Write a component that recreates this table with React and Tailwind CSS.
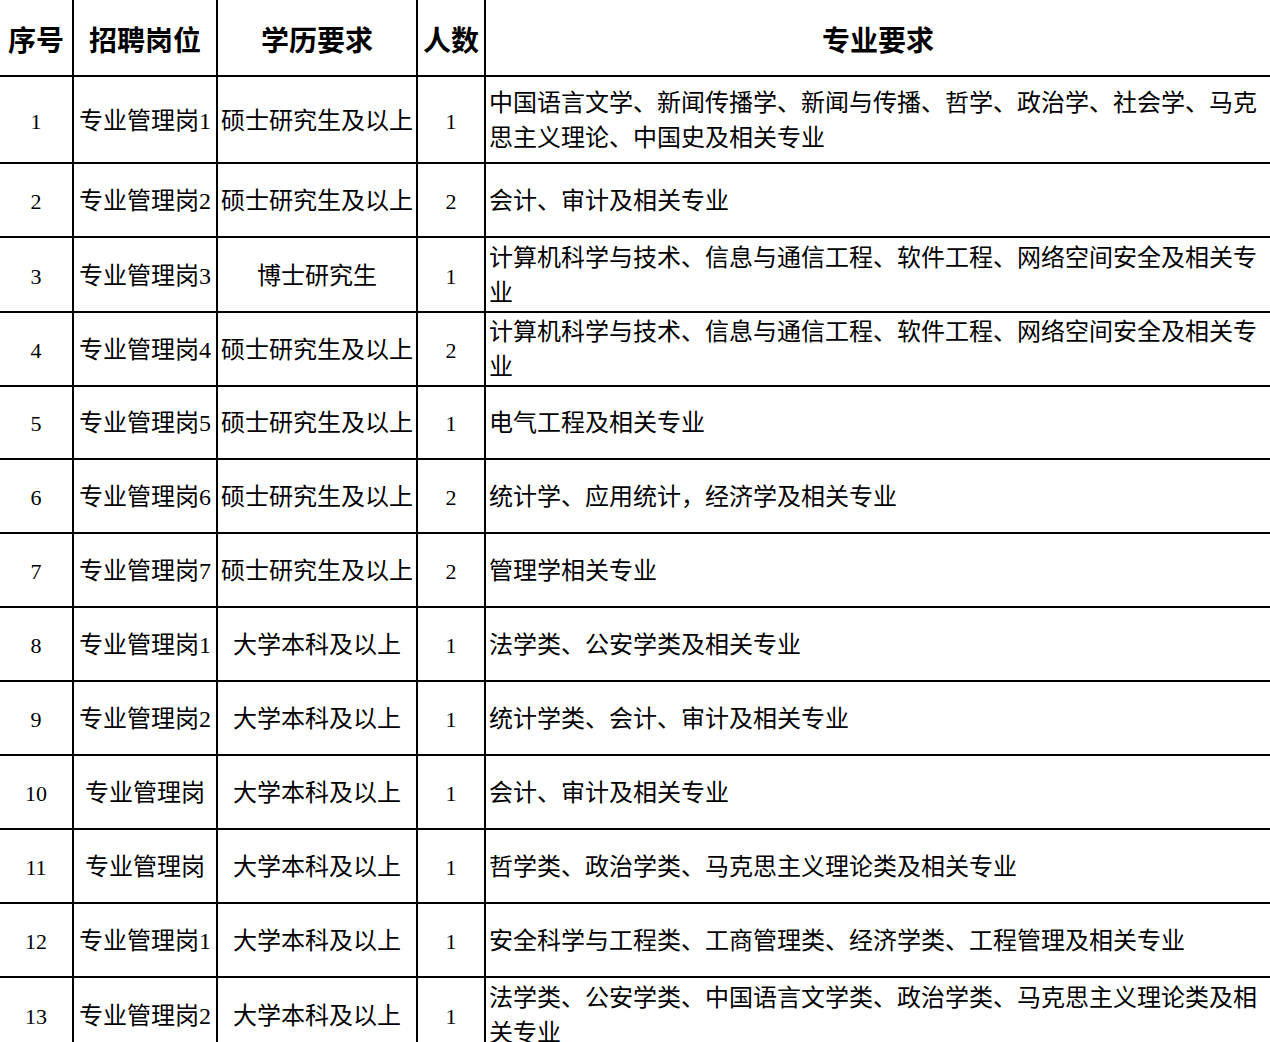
import React from "react";

const rows = [
  ["1", "专业管理岗1", "硕士研究生及以上", "1", "中国语言文学、新闻传播学、新闻与传播、哲学、政治学、社会学、马克思主义理论、中国史及相关专业", "h-[87px]"],
  ["2", "专业管理岗2", "硕士研究生及以上", "2", "会计、审计及相关专业"],
  ["3", "专业管理岗3", "博士研究生", "1", "计算机科学与技术、信息与通信工程、软件工程、网络空间安全及相关专业"],
  ["4", "专业管理岗4", "硕士研究生及以上", "2", "计算机科学与技术、信息与通信工程、软件工程、网络空间安全及相关专业"],
  ["5", "专业管理岗5", "硕士研究生及以上", "1", "电气工程及相关专业"],
  ["6", "专业管理岗6", "硕士研究生及以上", "2", "统计学、应用统计，经济学及相关专业"],
  ["7", "专业管理岗7", "硕士研究生及以上", "2", "管理学相关专业"],
  ["8", "专业管理岗1", "大学本科及以上", "1", "法学类、公安学类及相关专业"],
  ["9", "专业管理岗2", "大学本科及以上", "1", "统计学类、会计、审计及相关专业"],
  ["10", "专业管理岗", "大学本科及以上", "1", "会计、审计及相关专业"],
  ["11", "专业管理岗", "大学本科及以上", "1", "哲学类、政治学类、马克思主义理论类及相关专业"],
  ["12", "专业管理岗1", "大学本科及以上", "1", "安全科学与工程类、工商管理类、经济学类、工程管理及相关专业"],
  ["13", "专业管理岗2", "大学本科及以上", "1", "法学类、公安学类、中国语言文学类、政治学类、马克思主义理论类及相关专业"],
];

const body = { fontFamily: '"Liberation Serif", "Noto Sans CJK SC", serif' };
const head = { fontFamily: '"Noto Sans CJK SC", "Liberation Sans", sans-serif' };

export default function App() {
  return (
    <div className="w-[1270px] h-[1042px] overflow-hidden bg-white text-black">
      <div
        className="grid grid-cols-[74px_144px_200px_68px_1fr] text-[28px] font-bold h-[77px]"
        style={head}
      >
        <div className="flex items-center justify-center border-r-2 border-b-2 border-black pt-[2px]">序号</div>
        <div className="flex items-center justify-center border-r-2 border-b-2 border-black pt-[2px]">招聘岗位</div>
        <div className="flex items-center justify-center border-r-2 border-b-2 border-black pt-[2px]">学历要求</div>
        <div className="flex items-center justify-center border-r-2 border-b-2 border-black pt-[2px]">人数</div>
        <div className="flex items-center justify-center border-b-2 border-black pt-[2px]">专业要求</div>
      </div>
      {rows.map((r, i) => (
        <div
          key={i}
          className={`grid grid-cols-[74px_144px_200px_68px_1fr] text-[24px] leading-[35px] ${r[5] ? r[5] : "h-[74px]"}`}
          style={body}
        >
          <div className="flex items-center justify-center border-r-2 border-b-2 border-black text-[22px] pt-[3px]">{r[0]}</div>
          <div className="flex items-center justify-center border-r-2 border-b-2 border-black whitespace-nowrap pt-[3px]">{r[1]}</div>
          <div className="flex items-center justify-center border-r-2 border-b-2 border-black whitespace-nowrap pt-[3px]">{r[2]}</div>
          <div className="flex items-center justify-center border-r-2 border-b-2 border-black text-[22px] pt-[3px]">{r[3]}</div>
          <div className="flex items-center border-b-2 border-black pl-[3px] pt-[3px]">
            <span>{r[4]}</span>
          </div>
        </div>
      ))}
    </div>
  );
}
